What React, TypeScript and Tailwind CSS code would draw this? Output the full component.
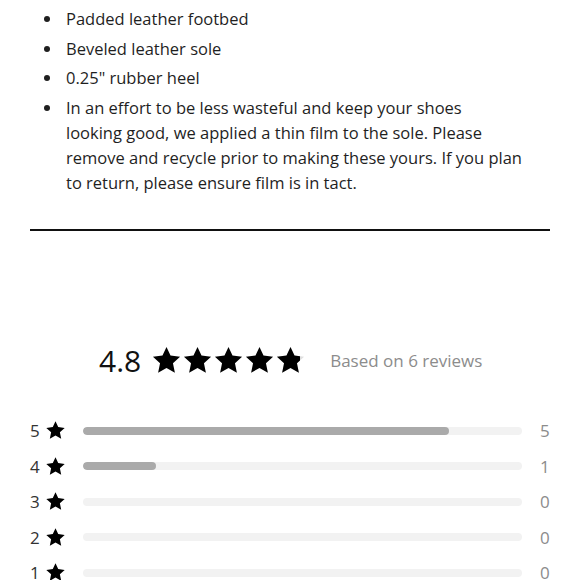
import React from 'react';

const FONT = "font-['Open_Sans','Liberation_Sans',sans-serif]";

const points: string[][] = [
  ['Padded leather footbed'],
  ['Beveled leather sole'],
  ['0.25" rubber heel'],
  [
    'In an effort to be less wasteful and keep your shoes',
    'looking good, we applied a thin film to the sole. Please',
    'remove and recycle prior to making these yours. If you plan',
    'to return, please ensure film is in tact.',
  ],
];

const histogram = [
  { stars: 5, count: 5 },
  { stars: 4, count: 1 },
  { stars: 3, count: 0 },
  { stars: 2, count: 0 },
  { stars: 1, count: 0 },
];

const Star: React.FC<{ className?: string; color?: string }> = ({ className, color = '#000' }) => (
  <svg viewBox="0 0 24 24" className={className}>
    <polygon
      points="12,1.5 15.1,8.1 22.5,9 17,14.1 18.5,21.5 12,17.8 5.5,21.5 7,14.1 1.5,9 8.9,8.1"
      fill={color}
    />
  </svg>
);

const PartialStar: React.FC<{ fill: number }> = ({ fill }) => (
  <div className="relative w-[31px] h-[31px]">
    <Star className="absolute inset-0 w-[31px] h-[31px]" color="#dedede" />
    <div className="absolute inset-y-0 left-0 overflow-hidden" style={{ width: `${fill * 100}%` }}>
      <Star className="w-[31px] h-[31px]" />
    </div>
  </div>
);

const App: React.FC = () => {
  const total = histogram.reduce((s, h) => s + h.count, 0);

  return (
    <div className={`w-[580px] h-[580px] overflow-hidden bg-white text-[#1f1f1f] ${FONT}`}>
      <ul className="pt-[6px] pl-[44px] pr-[20px] flex flex-col gap-[4.5px]">
        {points.map(lines => (
          <li key={lines[0]} className="flex items-start text-[16.5px] leading-[25px]">
            <span className="w-[6px] h-[6px] rounded-full bg-[#1f1f1f] mt-[10px] mr-[16px] shrink-0" />
            <span className="whitespace-nowrap">
              {lines.map((l, i) => (
                <React.Fragment key={i}>
                  {i > 0 && <br />}
                  {l}
                </React.Fragment>
              ))}
            </span>
          </li>
        ))}
      </ul>

      <div className="mx-[30px] mt-[34px] h-[2px] bg-[#111]" />

      <div className="mt-[114px] pl-[99px] flex items-center h-[32px]">
        <span className="text-[30px] font-medium text-[#111] mr-[10px]">4.8</span>
        <div className="flex items-center">
          {[1, 2, 3, 4].map(i => (
            <Star key={i} className="w-[31px] h-[31px]" />
          ))}
          <PartialStar fill={0.8} />
        </div>
        <span className="ml-[24px] text-[17px] text-[#8c8c8c]">Based on 6 reviews</span>
      </div>

      <div className="mt-[44px] px-[30px] flex flex-col gap-[15.5px]">
        {histogram.map(h => (
          <div key={h.stars} className="flex items-center h-[20px]">
            <span className="w-[12px] text-[17px] text-[#333] leading-none">{h.stars}</span>
            <Star className="w-[21px] h-[21px] ml-[3px]" />
            <div className="ml-[17px] w-[439px] h-[8px] rounded-full bg-[#f2f2f2] overflow-hidden">
              <div
                className="h-full rounded-full bg-[#aaaaaa]"
                style={{ width: `${total ? (h.count / total) * 100 : 0}%` }}
              />
            </div>
            <span className="ml-[18px] text-[17px] text-[#8c8c8c] leading-none">{h.count}</span>
          </div>
        ))}
      </div>
    </div>
  );
};

export default App;
